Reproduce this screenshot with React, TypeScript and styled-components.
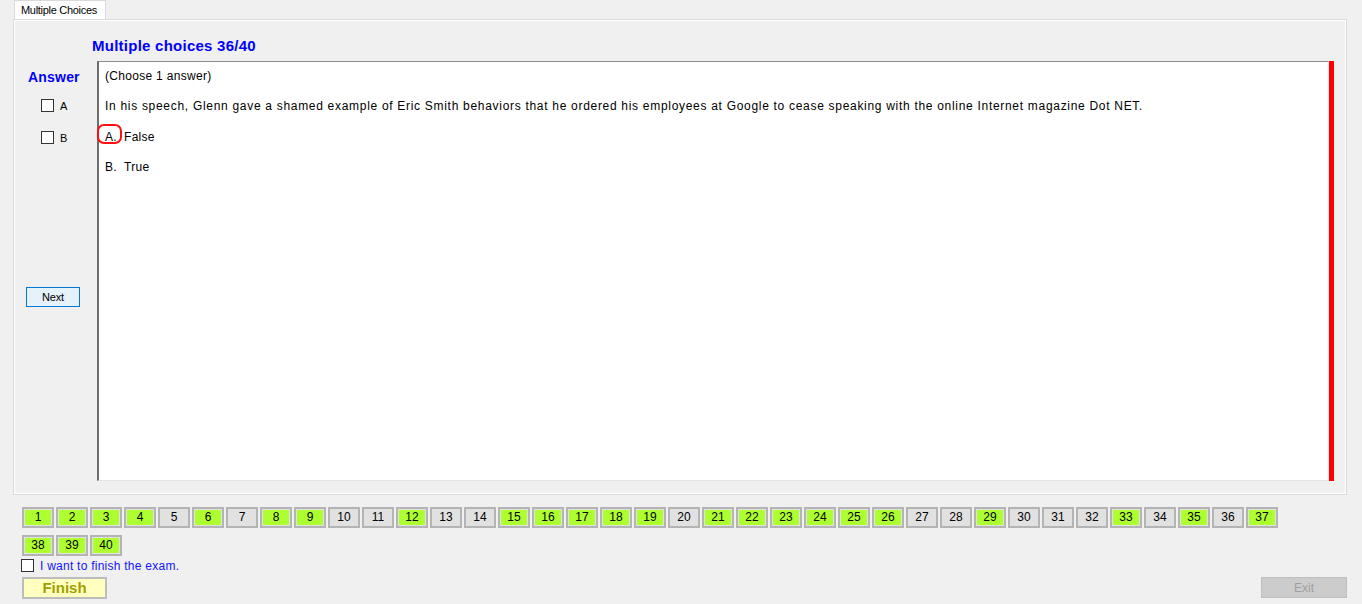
import React from "react";
import styled, { createGlobalStyle } from "styled-components";

const Global = createGlobalStyle`
  html, body { margin: 0; padding: 0; background: #f0f0f0; }
  body { font-family: "Liberation Sans", Arial, sans-serif; color: #000; }
  * { box-sizing: border-box; }
`;

const Page = styled.div`
  width: 1362px;
  height: 604px;
  background: #f0f0f0;
  display: flex;
  flex-direction: column;
  overflow: hidden;
`;

const TabStrip = styled.div`
  display: flex;
  padding-left: 14px;
  height: 20px;
`;

const Tab = styled.div`
  width: 92px;
  height: 20px;
  background: #ffffff;
  border: 1px solid #d9d9d9;
  border-bottom: none;
  font-size: 11px;
  letter-spacing: -0.3px;
  line-height: 18px;
  padding-left: 6px;
  color: #000;
`;

const TabPage = styled.div`
  margin-left: 13px;
  margin-top: -1px;
  width: 1334px;
  height: 476px;
  border: 1px solid #dadada;
  box-shadow: inset 0 0 0 1px #ffffff;
  display: flex;
  flex-direction: column;
`;

const Title = styled.div`
  margin: 17px 0 0 78px;
  font-size: 15px;
  line-height: 18px;
  font-weight: bold;
  letter-spacing: 0.25px;
  color: #0000ff;
`;

const Body = styled.div`
  margin-top: 6px;
  display: flex;
  height: 420px;
`;

const LeftCol = styled.div`
  width: 83px;
  display: flex;
  flex-direction: column;
`;

const AnswerLabel = styled.div`
  margin: 8px 0 0 14px;
  font-size: 14px;
  line-height: 16px;
  font-weight: bold;
  letter-spacing: 0.2px;
  color: #0000ff;
`;

const OptionRow = styled.label<{ $gap: number }>`
  display: flex;
  align-items: center;
  gap: 6px;
  margin: ${(p) => p.$gap}px 0 0 27px;
  height: 13px;
  font-size: 11px;
  color: #000;
`;

const Box = styled.span`
  display: inline-block;
  width: 13px;
  height: 13px;
  border: 1px solid #333333;
  background: #ffffff;
  flex: none;
`;

const NextButton = styled.button`
  margin: 143px 0 0 12px;
  width: 54px;
  height: 20px;
  background: #e5f1fb;
  border: 1px solid #0078d7;
  font-family: "Liberation Sans", Arial, sans-serif;
  font-size: 11px;
  letter-spacing: -0.2px;
  color: #000;
  padding: 0;
`;

const ContentBox = styled.div`
  width: 1232px;
  height: 420px;
  background: #ffffff;
  border-left: 2px solid #6d6d6d;
  border-top: 1px solid #8c8c8c;
  border-right: 1px solid #e3e3e3;
  border-bottom: 1px solid #e3e3e3;
  padding: 7px 0 0 6px;
  font-size: 12px;
  line-height: 14px;
  letter-spacing: 0.3px;
`;

const RedBar = styled.div`
  width: 5px;
  height: 420px;
  background: #ff0000;
`;

const Para = styled.div<{ $wide?: boolean }>`
  position: relative;
  height: 14px;
  margin-bottom: 16.4px;
  white-space: nowrap;
  letter-spacing: ${(p) => (p.$wide ? "0.7px" : "0.3px")};
`;

const Letter = styled.span`
  display: inline-block;
  width: 19px;
`;

const Mark = styled.span`
  position: absolute;
  left: -8px;
  top: -6px;
  width: 25px;
  height: 20px;
  border: 2px solid #ff1010;
  border-radius: 7px;
`;

const Numbers = styled.div`
  margin: 12px 0 0 22px;
  width: 1262px;
  display: flex;
  flex-wrap: wrap;
  column-gap: 2px;
  row-gap: 7px;
`;

const NumButton = styled.div`
  width: 32px;
  height: 21px;
  border: 2px solid #b4b4b4;
  background: #e1e1e1;
  padding: 1px;
  display: flex;
`;

const NumFill = styled.span<{ $done: boolean }>`
  flex: 1;
  background: ${(p) => (p.$done ? "#adff2f" : "#e1e1e1")};
  font-size: 12px;
  line-height: 15px;
  text-align: center;
  color: #000;
`;

const FinishRow = styled.label`
  margin: 2px 0 0 21px;
  display: flex;
  align-items: center;
  gap: 6px;
  height: 15px;
  font-size: 12px;
  letter-spacing: 0.25px;
  color: #1414ff;
`;

const Buttons = styled.div`
  margin: 4px 15px 0 22px;
  display: flex;
  justify-content: space-between;
  align-items: flex-start;
`;

const FinishButton = styled.button`
  width: 85px;
  height: 22px;
  background: #ffffc0;
  border: 2px solid #bdbdbd;
  font-family: "Liberation Sans", Arial, sans-serif;
  font-weight: bold;
  font-size: 15px;
  color: #a0a000;
  padding: 0;
  line-height: 18px;
`;

const ExitButton = styled.button`
  width: 86px;
  height: 21px;
  background: #cccccc;
  border: 1px solid #bfbfbf;
  font-family: "Liberation Sans", Arial, sans-serif;
  font-size: 12px;
  color: #a0a0a0;
  padding: 0;
`;

const done = new Set([
  1, 2, 3, 4, 6, 8, 9, 12, 15, 16, 17, 18, 19, 21, 22, 23, 24, 25, 26, 29, 33, 35,
  37, 38, 39, 40,
]);

export default function App() {
  const nums = Array.from({ length: 40 }, (_, i) => i + 1);
  return (
    <Page>
      <Global />
      <TabStrip>
        <Tab>Multiple Choices</Tab>
      </TabStrip>
      <TabPage>
        <Title>Multiple choices 36/40</Title>
        <Body>
          <LeftCol>
            <AnswerLabel>Answer</AnswerLabel>
            <OptionRow $gap={14}>
              <Box />A
            </OptionRow>
            <OptionRow $gap={19}>
              <Box />B
            </OptionRow>
            <NextButton>Next</NextButton>
          </LeftCol>
          <ContentBox>
            <Para>(Choose 1 answer)</Para>
            <Para $wide>
              In his speech, Glenn gave a shamed example of Eric Smith behaviors that he
              ordered his employees at Google to cease speaking with the online Internet
              magazine Dot NET.
            </Para>
            <Para>
              <Mark />
              <Letter>A.</Letter>False
            </Para>
            <Para>
              <Letter>B.</Letter>True
            </Para>
          </ContentBox>
          <RedBar />
        </Body>
      </TabPage>
      <Numbers>
        {nums.map((n) => (
          <NumButton key={n}>
            <NumFill $done={done.has(n)}>{n}</NumFill>
          </NumButton>
        ))}
      </Numbers>
      <FinishRow>
        <Box />I want to finish the exam.
      </FinishRow>
      <Buttons>
        <FinishButton>Finish</FinishButton>
        <ExitButton>Exit</ExitButton>
      </Buttons>
    </Page>
  );
}
